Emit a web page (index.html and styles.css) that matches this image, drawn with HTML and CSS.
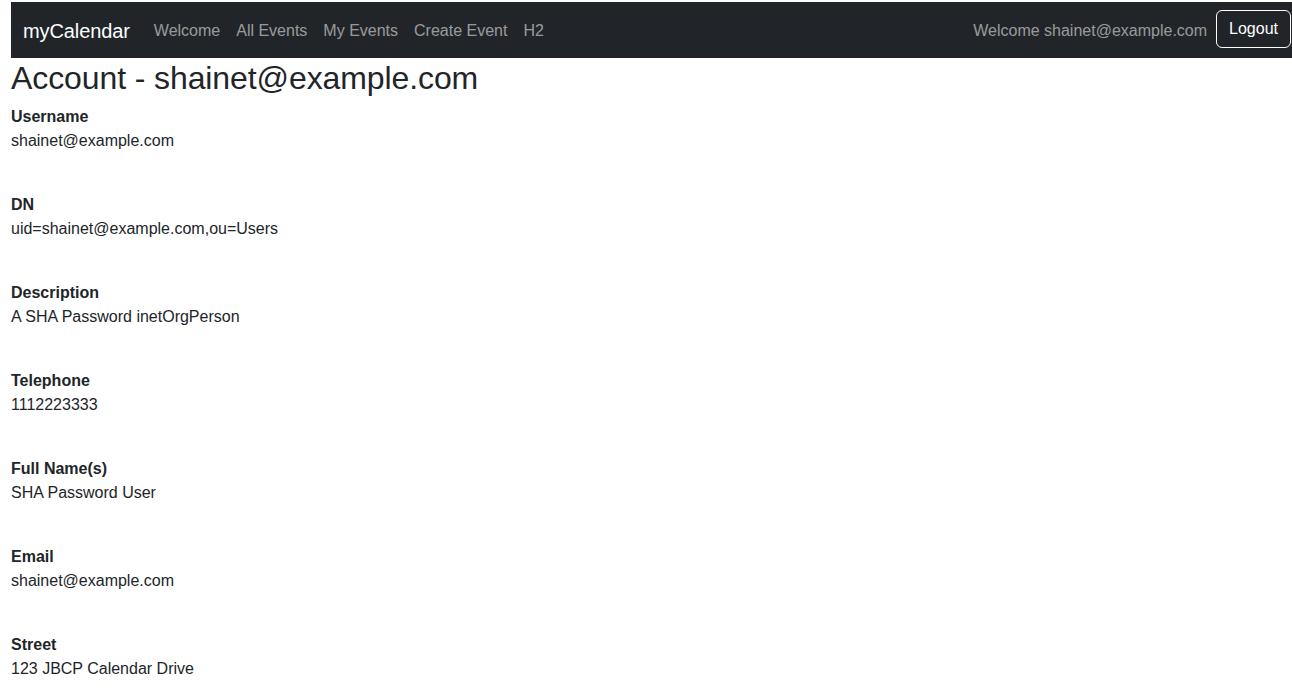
FILE: index.html
```html
<!DOCTYPE html>
<html lang="en">
<head>
<meta charset="utf-8">
<title>myCalendar - Account</title>
<link rel="stylesheet" href="styles.css">
</head>
<body>
<div class="page">
  <nav class="navbar">
    <a class="brand" href="#">myCalendar</a>
    <ul class="nav">
      <li><a class="nav-link" href="#">Welcome</a></li>
      <li><a class="nav-link" href="#">All Events</a></li>
      <li><a class="nav-link" href="#">My Events</a></li>
      <li><a class="nav-link" href="#">Create Event</a></li>
      <li><a class="nav-link" href="#">H2</a></li>
    </ul>
    <div class="nav-right">
      <span class="nav-text">Welcome shainet@example.com</span>
      <button class="btn-logout" type="button">Logout</button>
    </div>
  </nav>
  <main class="content">
    <h2 class="title">Account - shainet@example.com</h2>
    <dl class="fields">
      <div class="field"><dt>Username</dt><dd>shainet@example.com</dd></div>
      <div class="field"><dt>DN</dt><dd>uid=shainet@example.com,ou=Users</dd></div>
      <div class="field"><dt>Description</dt><dd>A SHA Password inetOrgPerson</dd></div>
      <div class="field"><dt>Telephone</dt><dd>1112223333</dd></div>
      <div class="field"><dt>Full Name(s)</dt><dd>SHA Password User</dd></div>
      <div class="field"><dt>Email</dt><dd>shainet@example.com</dd></div>
      <div class="field"><dt>Street</dt><dd>123 JBCP Calendar Drive</dd></div>
    </dl>
  </main>
</div>
</body>
</html>
```
FILE: styles.css
```css
* { box-sizing: border-box; }
html, body { margin: 0; padding: 0; }
body {
  font-family: "Liberation Sans", Arial, sans-serif;
  font-size: 16px;
  line-height: 1.5;
  color: #212529;
  background: #fff;
  overflow: hidden;
}
.page {
  padding: 2px 0 0 11px;
}
.navbar {
  display: flex;
  align-items: center;
  height: 56px;
  background: #212529;
  padding: 2px 1px 0 12px;
}
.brand {
  color: #fff;
  text-decoration: none;
  font-size: 20px;
  line-height: 30px;
  margin-right: 16px;
  letter-spacing: -0.1px;
}
.nav {
  display: flex;
  list-style: none;
  margin: 0;
  padding: 0;
}
.nav-link {
  display: block;
  padding: 8px 8px;
  color: rgba(255, 255, 255, 0.55);
  text-decoration: none;
}
.nav-right {
  margin-left: auto;
  display: flex;
  align-items: center;
}
.nav-text {
  color: rgba(255, 255, 255, 0.55);
  margin-right: 9px;
}
.btn-logout {
  font-family: inherit;
  font-size: 16px;
  line-height: 24px;
  color: #fff;
  background: transparent;
  border: 1px solid #fff;
  border-radius: 6px;
  padding: 6px 12px;
  margin-top: -4px;
}
.title {
  margin: 0 0 8px;
  padding-top: 1px;
  font-size: 32px;
  font-weight: 500;
  line-height: 1.2;
  letter-spacing: -0.1px;
}
.fields {
  margin: 0;
  display: flex;
  flex-direction: column;
  gap: 40px;
}
.field dt {
  font-weight: 700;
}
.field dd {
  margin: 0;
}
```
